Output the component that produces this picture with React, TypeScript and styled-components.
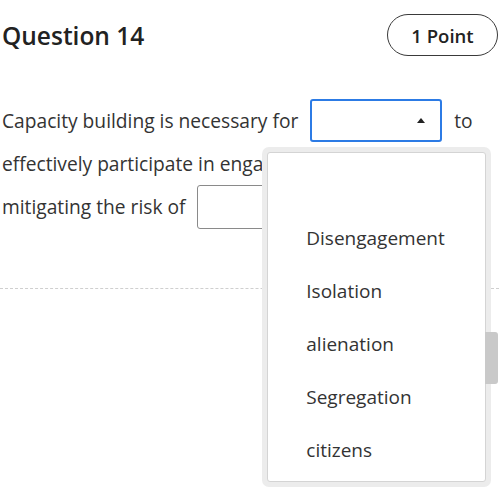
import React from "react";
import styled, { createGlobalStyle } from "styled-components";

const GlobalStyle = createGlobalStyle`
  body {
    margin: 0;
    background: #fff;
    font-family: "Open Sans", "Liberation Sans", sans-serif;
    color: #333;
  }
`;

const Page = styled.div`
  width: 499px;
  height: 500px;
  padding-left: 2px;
  box-sizing: border-box;
  overflow: hidden;
`;

const Header = styled.div`
  display: flex;
  align-items: center;
  justify-content: space-between;
  height: 42px;
  margin-top: 14px;
  padding-right: 1px;
`;

const Title = styled.h2`
  margin: 0;
  font-size: 24.5px;
  font-weight: 550;
  color: #222;
`;

const PointsPill = styled.div`
  width: 111px;
  height: 42px;
  box-sizing: border-box;
  border: 1px solid #3a3a3a;
  border-radius: 21px;
  display: flex;
  align-items: center;
  justify-content: center;
  font-size: 18.5px;
  font-weight: 550;
  color: #222;
`;

const Prompt = styled.div`
  margin-top: 43px;
  font-size: 19.2px;
`;

const Line = styled.div`
  display: flex;
  align-items: center;
  gap: 12px;
  height: 43px;
  white-space: nowrap;
`;

const SelectWrap = styled.div`
  position: relative;
`;

const SelectBox = styled.div<{ $open?: boolean }>`
  width: 132px;
  height: 43px;
  box-sizing: border-box;
  border: 2px solid ${(p) => (p.$open ? "#2c7be5" : "#888")};
  border-radius: 3px;
  display: flex;
  align-items: center;
  justify-content: flex-end;
  padding-right: 15px;
`;

const Caret = styled.span`
  width: 0;
  height: 0;
  border-left: 4.5px solid transparent;
  border-right: 4.5px solid transparent;
  border-bottom: 5px solid #222;
`;

const TextBlank = styled.div`
  width: 140px;
  height: 44px;
  box-sizing: border-box;
  border: 1px solid #8a8a8a;
  border-radius: 3px;
`;

const Dropdown = styled.div`
  position: absolute;
  left: -48px;
  top: 48px;
  width: 229px;
  height: 340px;
  box-sizing: border-box;
  padding: 5px;
  background: #ececec;
  border-radius: 7px;
  z-index: 2;
`;

const OptionList = styled.ul`
  list-style: none;
  margin: 0;
  height: 100%;
  box-sizing: border-box;
  padding: 5px 0;
  background: #fff;
  border: 1px solid #d4d4d4;
  border-radius: 3px;
  overflow: hidden;
`;

const OptionItem = styled.li`
  height: 53px;
  display: flex;
  align-items: center;
  padding-left: 38px;
  font-size: 19px;
  color: #333;
`;

const ScrollThumb = styled.div`
  position: absolute;
  left: 223px;
  top: 185px;
  width: 13px;
  height: 52px;
  background: #c9c9c9;
  border-radius: 0 3px 3px 0;
`;

const Divider = styled.hr`
  margin: 60px 0 0 -2px;
  border: none;
  border-top: 1px dashed #cfcfcf;
`;

const options = ["", "Disengagement", "Isolation", "alienation", "Segregation", "citizens"];

const App = () => {
  return (
    <Page>
      <GlobalStyle />
      <Header>
        <Title>Question 14</Title>
        <PointsPill>1 Point</PointsPill>
      </Header>
      <Prompt>
        <Line>
          <span>Capacity building is necessary for</span>
          <SelectWrap>
            <SelectBox $open>
              <Caret />
            </SelectBox>
            <Dropdown>
              <OptionList>
                {options.map((o, i) => (
                  <OptionItem key={i}>{o}</OptionItem>
                ))}
              </OptionList>
              <ScrollThumb />
            </Dropdown>
          </SelectWrap>
          <span>to</span>
        </Line>
        <Line>
          <span>effectively participate in engagement processes while</span>
        </Line>
        <Line>
          <span>mitigating the risk of</span>
          <TextBlank />
        </Line>
      </Prompt>
      <Divider />
    </Page>
  );
};

export default App;
